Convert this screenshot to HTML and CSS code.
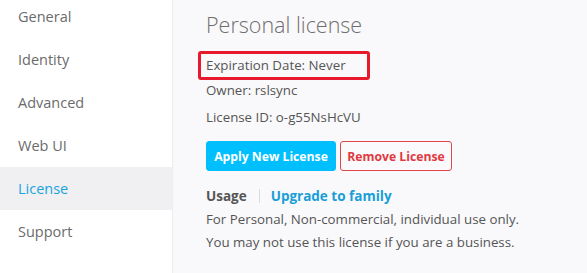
FILE: index.html
```html
<!DOCTYPE html>
<html>
<head>
<meta charset="utf-8">
<link rel="stylesheet" href="styles.css">
</head>
<body>
<div class="app">
  <nav class="sidebar">
    <div class="nav-item">General</div>
    <div class="nav-item">Identity</div>
    <div class="nav-item">Advanced</div>
    <div class="nav-item">Web UI</div>
    <div class="nav-item active">License</div>
    <div class="nav-item">Support</div>
  </nav>
  <main class="main">
    <h1 class="title">Personal license</h1>
    <div class="info highlight">Expiration Date: Never</div>
    <div class="info">Owner: rslsync</div>
    <div class="info info-id">License ID: o-g55NsHcVU</div>
    <div class="buttons">
      <button class="btn btn-primary">Apply New License</button>
      <button class="btn btn-danger">Remove License</button>
    </div>
    <div class="usage">
      <span class="usage-label">Usage</span>
      <span class="sep"></span>
      <span class="upgrade">Upgrade to family</span>
    </div>
    <p class="desc">For Personal, Non-commercial, individual use only.</p>
    <p class="desc">You may not use this license if you are a business.</p>
  </main>
</div>
</body>
</html>
```
FILE: styles.css
```css
html, body {
  margin: 0;
  padding: 0;
}
body {
  font-family: "Open Sans", "Noto Sans", sans-serif;
  background: #f9f9fb;
  color: #555;
  width: 587px;
  height: 273px;
  overflow: hidden;
}
.app {
  display: flex;
  height: 273px;
  margin-top: -5px;
}
.sidebar {
  width: 172px;
  background: #fff;
  border-right: 1px solid #ececef;
  flex-shrink: 0;
  height: 290px;
}
.nav-item {
  height: 43px;
  line-height: 43px;
  padding-left: 18px;
  font-size: 14.5px;
  color: #6b6b6b;
}
.nav-item.active {
  background: #f0f0f3;
  color: #1aa3dd;
}
.main {
  padding-left: 33px;
  padding-top: 16px;
  display: flex;
  flex-direction: column;
  align-items: flex-start;
}
.title {
  margin: 0 0 12px 0;
  font-size: 21.5px;
  font-weight: 300;
  color: #6e6e6e;
  line-height: 28px;
}
.info {
  font-size: 13.3px;
  color: #555;
  line-height: 20px;
}
.info-id {
  margin-top: 7px;
}
.highlight {
  margin-left: -8px;
  padding: 0 21px 0 5px;
  border: 3px solid #e8192c;
  border-radius: 3px;
  line-height: 23px;
}
.buttons {
  display: flex;
  gap: 4px;
  margin-top: 14px;
}
.btn {
  font-family: inherit;
  font-size: 12.2px;
  font-weight: 700;
  height: 30px;
  border-radius: 3px;
  padding: 0;
  white-space: nowrap;
  cursor: pointer;
}
.btn-primary {
  background: #00bfff;
  color: #fff;
  border: 1px solid #00bfff;
  width: 130px;
}
.btn-danger {
  background: #fafafc;
  color: #e0393f;
  border: 1px solid #e0474c;
  width: 112px;
}
.usage {
  display: flex;
  align-items: center;
  margin-top: 15px;
  font-size: 13.5px;
  font-weight: 700;
  line-height: 20px;
}
.usage-label {
  color: #555;
}
.sep {
  width: 1px;
  height: 14px;
  background: #dcdcdc;
  margin: 0 11px 0 12px;
}
.upgrade {
  color: #1a9ed8;
}
.desc {
  margin: 3px 0 0 0;
  font-size: 13.3px;
  line-height: 20px;
  color: #555;
}
```
